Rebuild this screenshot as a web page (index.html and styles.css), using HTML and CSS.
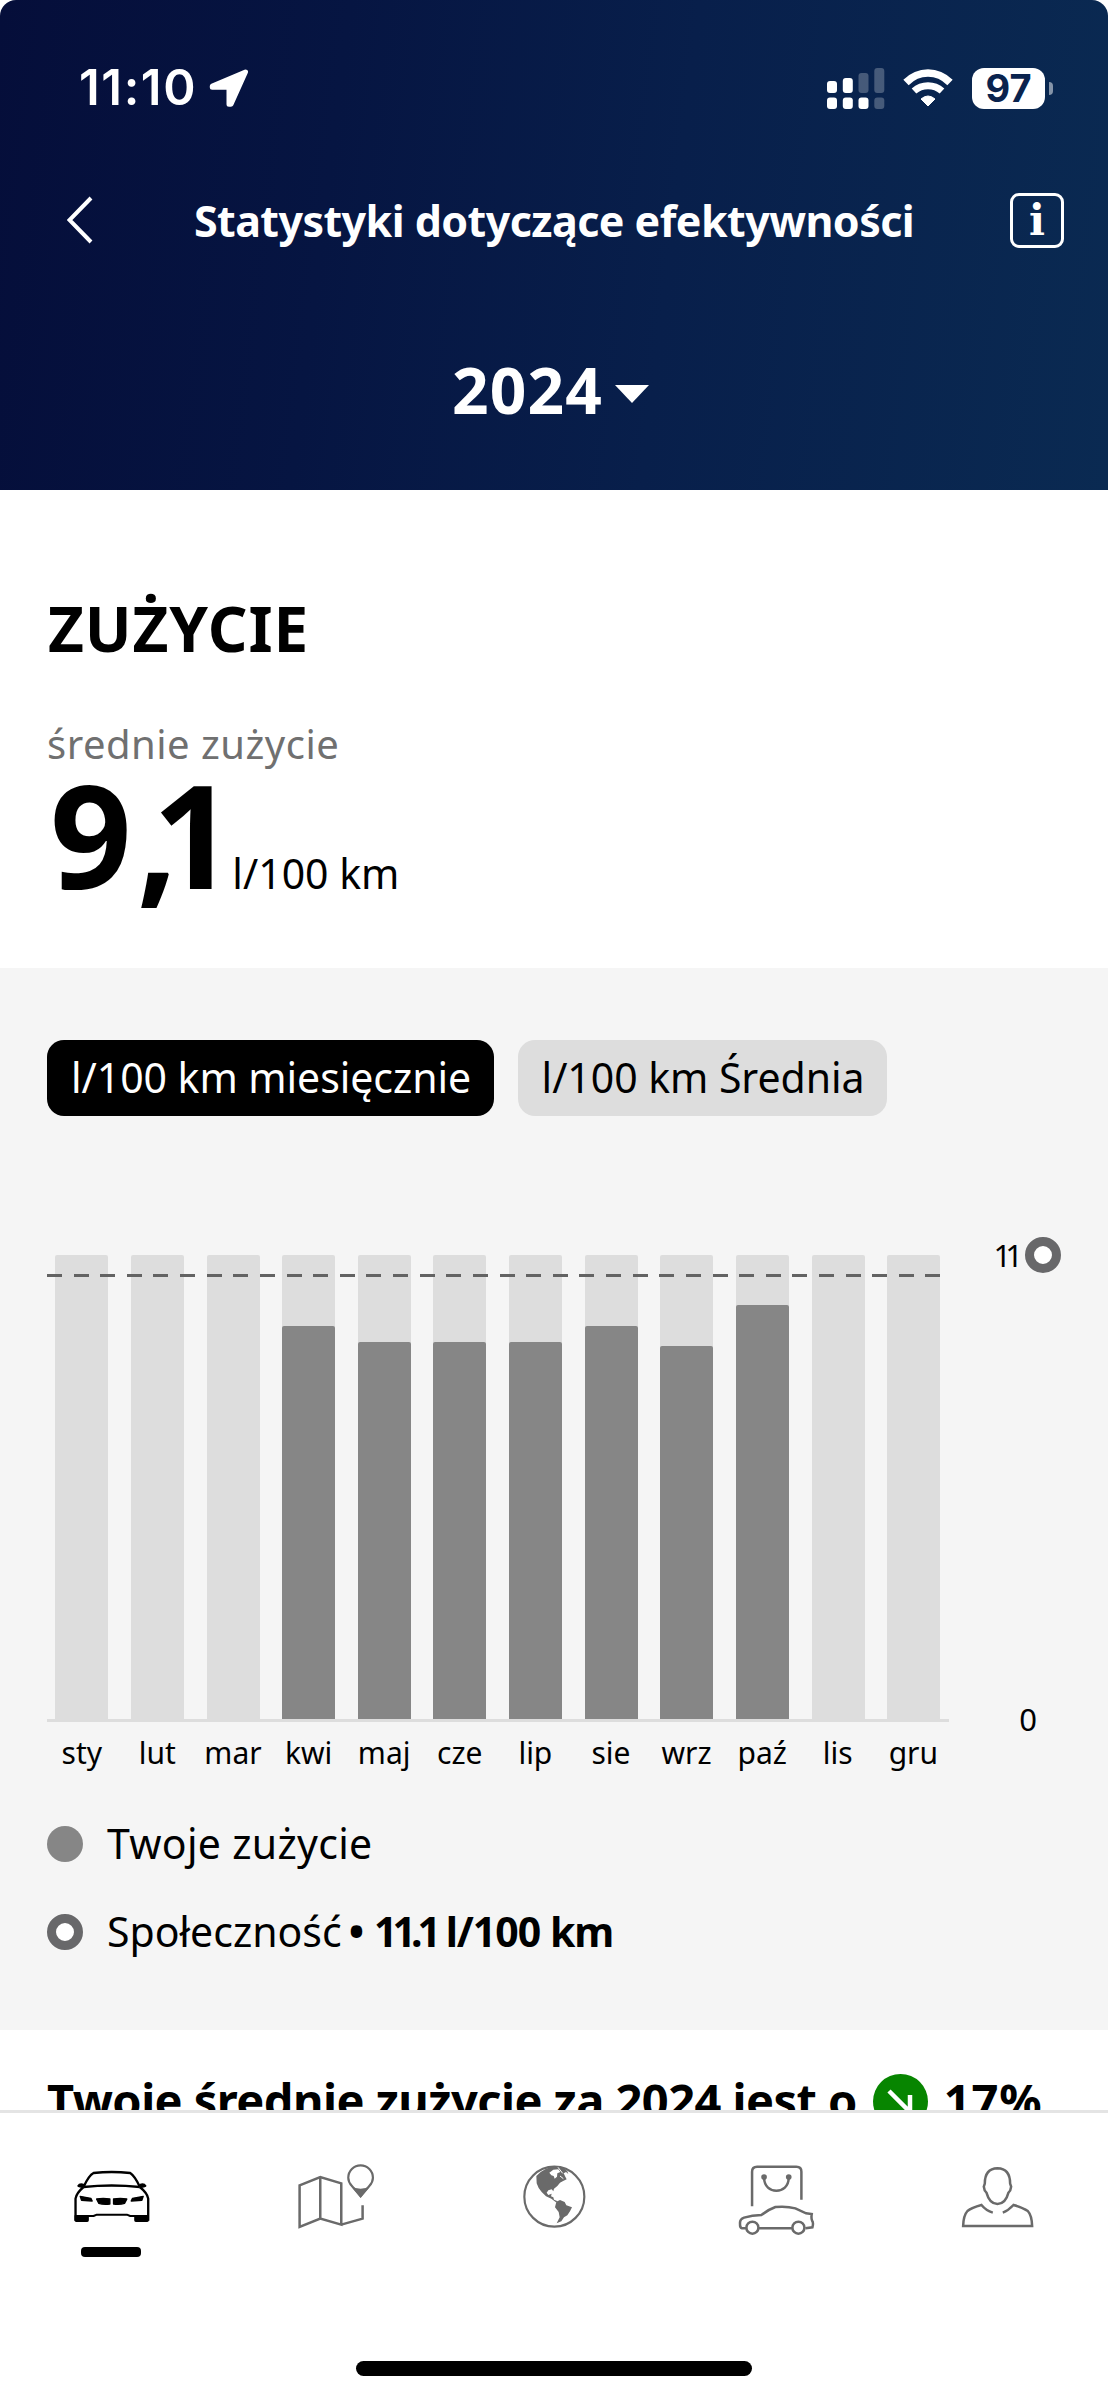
FILE: index.html
```
<!DOCTYPE html>
<html lang="pl">
<head>
    <meta charset="UTF-8">
    <meta name="viewport" content="width=device-width, initial-scale=1.0">
    <title>Statystyki dotyczące efektywności</title>
    <link rel="stylesheet" href="styles.css">
</head>
<body>
    <header class="header">
        <div class="status-bar">
            <span class="time">11:10</span>
            <svg class="location" width="40" height="39" viewBox="0 0 40 39">
                <path d="M36.5 3 L3.3 17 V18.2 H20 V35.3 H22 Z" fill="#fff" stroke="#fff" stroke-width="5" stroke-linejoin="round"/>
            </svg>
            <div class="status-icons">
                <svg width="58" height="41" viewBox="0 0 58 41" fill="#fff">
                    <rect x="0" y="13" width="10" height="12" rx="3"/>
                    <rect x="15.8" y="10" width="10" height="15" rx="3"/>
                    <rect x="31.5" y="5" width="10" height="20" rx="3" opacity=".25"/>
                    <rect x="47.3" y="0" width="10" height="25" rx="3" opacity=".25"/>
                    <rect x="0" y="29.5" width="10" height="11.5" rx="3"/>
                    <rect x="15.8" y="29.5" width="10" height="11.5" rx="3"/>
                    <rect x="31.5" y="29.5" width="10" height="11.5" rx="3"/>
                    <rect x="47.3" y="29.5" width="10" height="11.5" rx="3" opacity=".25"/>
                </svg>
                <svg width="50" height="38" viewBox="0 0 50 38">
                    <path d="M3 13.5 Q12.5 4 25 4 T47 13.5" fill="none" stroke="#fff" stroke-width="7.5"/>
                    <path d="M11 22 Q17 16.7 25 16.7 T39 22" fill="none" stroke="#fff" stroke-width="7"/>
                    <path d="M18 30 Q25 24 32 30 L25 37 Z" fill="#fff" stroke="#fff" stroke-width="1" stroke-linejoin="round"/>
                </svg>
                <div class="battery">
                    <span class="battery-level">97</span>
                    <span class="battery-nub"></span>
                </div>
            </div>
        </div>
        <div class="title-bar">
            <svg class="back" width="26" height="48" viewBox="0 0 26 48">
                <path d="M24 2 L2.5 24 L24 46" fill="none" stroke="#fff" stroke-width="4"/>
            </svg>
            <h1>Statystyki dotyczące efektywności</h1>
            <span class="info">i</span>
        </div>
        <div class="year">
            <span>2024</span>
            <span class="caret"></span>
        </div>
    </header>

    <main class="content">
        <section class="summary">
            <h2>ZUŻYCIE</h2>
            <div class="summary-label">średnie zużycie</div>
            <div class="summary-value"><strong>9<span class="comma">,</span>1</strong><span class="unit">l/100 km</span></div>
        </section>

        <section class="chart-section">
            <div class="chips">
                <span class="chip active">l/100 km miesięcznie</span>
                <span class="chip">l/100 km Średnia</span>
            </div>

            <div class="chart">
                <div class="plot">
                    <div class="bars">
                        <div class="bar"></div>
                        <div class="bar"></div>
                        <div class="bar"></div>
                        <div class="bar"><div class="fill" style="height: 84.8%"></div></div>
                        <div class="bar"><div class="fill" style="height: 81.2%"></div></div>
                        <div class="bar"><div class="fill" style="height: 81.2%"></div></div>
                        <div class="bar"><div class="fill" style="height: 81.2%"></div></div>
                        <div class="bar"><div class="fill" style="height: 84.8%"></div></div>
                        <div class="bar"><div class="fill" style="height: 80.3%"></div></div>
                        <div class="bar"><div class="fill" style="height: 89.2%"></div></div>
                        <div class="bar"></div>
                        <div class="bar"></div>
                        <div class="average-line"></div>
                    </div>
                    <div class="months">
                        <span>sty</span>
                        <span>lut</span>
                        <span>mar</span>
                        <span>kwi</span>
                        <span>maj</span>
                        <span>cze</span>
                        <span>lip</span>
                        <span>sie</span>
                        <span>wrz</span>
                        <span>paź</span>
                        <span>lis</span>
                        <span>gru</span>
                    </div>
                </div>
                <div class="axis">
                    <div class="axis-max"><span>11</span><i class="ring"></i></div>
                    <div class="axis-min">0</div>
                </div>
            </div>

            <div class="legend">
                <div class="legend-row"><i class="dot"></i><span class="legend-text own">Twoje zużycie</span></div>
                <div class="legend-row"><i class="ring"></i><span class="legend-text">Społeczność</span><b class="bullet">•</b><b class="community"><span class="number">11.1</span> l/100 km</b></div>
            </div>
        </section>

        <section class="message">
            <span class="message-text">Twoje średnie zużycie za 2024 jest o</span>
            <svg width="55" height="55" viewBox="0 0 55 55">
                <circle cx="27.5" cy="27.5" r="27.5" fill="#078500"/>
                <path d="M16 17 L36 37 M37 21 V38.5 H19" fill="none" stroke="#fff" stroke-width="4.5"/>
            </svg>
            <span class="message-percent">17%</span>
        </section>
    </main>

    <nav class="tab-bar">
        <!-- vehicle -->
        <a class="tab active">
            <svg viewBox="8.4 -6 264 264" fill="none" stroke="#000" stroke-width="7" stroke-linejoin="round">
                <path d="M58 93 Q74 58 88 51 Q142 45 198 51 Q212 60 227 93"/>
                <path d="M58 93 Q142 84 227 93"/>
                <path d="M58 93 Q36 112 34 128 V194 M227 93 Q250 112 252 128 V194"/>
                <path d="M34 180 H88 L98 176 H188 L198 180 H252" stroke-width="6"/>
                <path d="M31 178 H74 V193 Q74 198 69 198 H36 Q31 198 31 193 Z M210 178 H254 V193 Q254 198 249 198 H215 Q210 198 210 193 Z" fill="#000" stroke="none"/>
                <path d="M60 84 Q46 78 39 89 Q40 95 58 96 Z M226 84 Q240 78 247 89 Q246 95 228 96 Z" fill="#000" stroke="none"/>
                <path d="M48 121 L80 127 L84 135 L52 133 Z M237 121 L205 127 L201 135 L233 133 Z" fill="#000" stroke-width="4"/>
                <path d="M97 129 Q117 126 137 129 V144 Q116 146 104 142 Z M188 129 Q168 126 148 129 V144 Q169 146 181 142 Z" fill="#000" stroke-width="4"/>
            </svg>
        </a>
        <!-- map -->
        <a class="tab">
            <svg viewBox="673.2 -6 264 264" fill="none" stroke="#6a6a6a" stroke-width="7.5">
                <path d="M708 88 L770 63 L833 82 V206 L770 188 L708 213 Z M770 63 V188 M833 206 L897 188 V148"/>
                <path d="M891 121 L865 90 Q854 78 854 65 A37 37 0 0 1 928 65 Q928 78 917 90 Z" stroke-width="6.5"/>
                <path d="M862 90 Q891 107 920 90 L891 125 Z" fill="#6a6a6a" stroke="none"/>
            </svg>
        </a>
        <!-- globe -->
        <a class="tab">
            <svg viewBox="-12 -6 264 264" fill="#6a6a6a">
                <circle cx="121" cy="122" r="90" fill="none" stroke="#6a6a6a" stroke-width="6.5"/>
                <path d="M67 60 Q90 34 128 30 L150 36 L160 46 L163 54 L156 48 L149 52 L154 62 L158 70 L146 76 L138 80 L130 90 L120 98 L118 106 L113 100 L103 103 L98 110 L103 117 L113 113 L111 121 L118 124 L120 131 L131 136 L126 139 L112 128 L96 121 L83 108 L74 96 L68 82 Z"/>
                <path d="M118 41 L106 50 L112 58 L119 60 L122 68 L129 62 L130 52 L139 48 L133 40 Z" fill="#fff"/>
                <path d="M132 34 L146 52 M138 60 L148 68" stroke="#fff" stroke-width="3"/>
                <path d="M127 137 L138 132 L152 138 L157 148 L174 154 L168 166 L160 178 L150 184 L142 196 L128 202 L137 184 L134 168 L123 154 Z"/>
            </svg>
        </a>
        <!-- store -->
        <a class="tab">
            <svg viewBox="19.8 -6 264 264" fill="none" stroke="#6a6a6a" stroke-width="7.5">
                <path d="M80 151 V47 Q80 32 95 32 H213 Q228 32 228 47 V131"/>
                <path d="M116 66 C117 92 134 104 153 104 S189 92 190 66"/>
                <circle cx="116" cy="63" r="8.5" fill="#6a6a6a" stroke="none"/>
                <circle cx="190" cy="63" r="8.5" fill="#6a6a6a" stroke="none"/>
                <path d="M62 217 H50 Q43 215 44 204 Q42 190 56 185 Q80 178 108 177 Q130 160 150 153 Q185 150 210 157 L242 172 L259 174 Q257 186 260 194 Q265 200 261 214 L240 217 M100 217 H200"/>
                <circle cx="81" cy="215" r="18"/>
                <circle cx="219" cy="215" r="18"/>
            </svg>
        </a>
        <!-- profile -->
        <a class="tab">
            <svg viewBox="684.6 -6 264 264" fill="none" stroke="#6a6a6a" stroke-width="7.5">
                <path d="M818 37 Q780 38 780 83 L777 92 Q778 104 785 110 Q794 144 818 144 Q842 144 851 110 Q858 104 859 92 L856 83 Q856 38 818 37 Z"/>
                <path d="M804 170 Q784 164 770 147 Q740 155 728 165 Q716 178 715 210 H922 Q921 178 909 165 Q895 155 866 147 Q850 164 834 170"/>
            </svg>
        </a>
    </nav>
    <div class="home-indicator"></div>
</body>
</html>
```
FILE: styles.css
```
* {
    box-sizing: border-box;
}
body {
    margin: 0;
    width: 1108px;
    height: 2400px;
    overflow: hidden;
    background: #fff;
    color: #000;
    font-family: "Noto Sans", sans-serif;
}
h1, h2 {
    margin: 0;
}

/* header */
.header {
    height: 490px;
    border-radius: 16px 16px 0 0;
    background: linear-gradient(97deg, #050e3a 0%, #061542 30%, #081f4b 60%, #0a2a52 100%);
    color: #fff;
}
.status-bar {
    display: flex;
    align-items: center;
    height: 176px;
    padding: 0 55px 0 79px;
}
.time {
    font: 600 49px/60px Inter, sans-serif;
    letter-spacing: 1.6px;
}
.location {
    margin-left: 12px;
}
.status-icons {
    display: flex;
    align-items: center;
    gap: 18.7px;
    margin-left: auto;
}
.battery {
    display: flex;
    align-items: center;
    gap: 4px;
}
.battery-level {
    width: 73px;
    height: 41px;
    border-radius: 12px;
    background: #fff;
    color: #0a234e;
    font: 700 38px/41px Inter, sans-serif;
    text-align: center;
}
.battery-nub {
    width: 4px;
    height: 13px;
    border-radius: 0 4px 4px 0;
    background: rgba(255, 255, 255, 0.5);
}
.title-bar {
    display: flex;
    align-items: center;
    justify-content: space-between;
    height: 88px;
    padding: 0 44px 0 67px;
}
.title-bar h1 {
    font-size: 43px;
    line-height: 60px;
    letter-spacing: -0.55px;
    margin: 2px 0 0 5px;
}
.info {
    width: 54px;
    height: 55px;
    border: 3px solid #fff;
    border-radius: 9px;
    font: 700 42px/49px "DejaVu Serif", serif;
    text-align: center;
}
.year {
    display: flex;
    align-items: center;
    justify-content: center;
    gap: 12px;
    padding: 86px 7px 0 0;
    font-size: 64px;
    font-weight: 700;
    letter-spacing: 1.2px;
    line-height: 80px;
}
.caret {
    border: 17px solid transparent;
    border-top: 18px solid #fff;
    border-bottom: 0;
    margin-top: 8px;
}

/* scrollable content */
.content {
    height: 1620px;
    overflow: hidden;
}
.summary {
    height: 478px;
    padding: 98px 47px 0;
}
.summary h2 {
    font-size: 62px;
    line-height: 80px;
    letter-spacing: 0.9px;
    margin-left: 1px;
}
.summary-label {
    margin-top: 51px;
    color: #707070;
    font-size: 40px;
    line-height: 49px;
    letter-spacing: 0.5px;
}
.summary-value {
    display: flex;
    align-items: baseline;
    margin-top: 1px;
}
.summary-value strong {
    margin-left: 3px;
    font-size: 143px;
    line-height: 130px;
    letter-spacing: 5px;
}
.summary-value .comma {
    letter-spacing: -25px;
}
.unit {
    margin-left: -7px;
    font-size: 41px;
    line-height: 50px;
}

.chart-section {
    height: 1062px;
    padding: 72px 47px 0;
    background: #f5f5f5;
}
.chips {
    display: flex;
    gap: 23.5px;
}
.chip {
    height: 76px;
    padding: 0 23px 0 24px;
    border-radius: 17px;
    background: #ddd;
    font-size: 41px;
    letter-spacing: -0.05px;
    line-height: 75px;
    white-space: nowrap;
}
.chip.active {
    background: #000;
    color: #fff;
}
.chart {
    display: flex;
    justify-content: space-between;
    margin-top: 139px;
}
.plot {
    width: 902px;
}
.bars {
    position: relative;
    display: flex;
    justify-content: space-between;
    height: 467px;
    padding: 0 8.6px 0 8.2px;
    border-bottom: 3px solid #ddd;
}
.bar {
    display: flex;
    align-items: flex-end;
    width: 53px;
    border-radius: 2px 2px 0 0;
    background: #ddd;
}
.fill {
    width: 100%;
    border-radius: 2px 2px 0 0;
    background: #868686;
}
.average-line {
    position: absolute;
    top: 18.5px;
    left: 0;
    width: 894px;
    height: 3px;
    background: repeating-linear-gradient(90deg, #636363 0 15px, transparent 15px 26.62px);
}
.months {
    display: grid;
    grid-template-columns: repeat(12, 75.6px);
    margin: 11px 0 0 -3px;
    font-size: 30px;
    line-height: 40px;
    text-align: center;
}
.axis {
    display: flex;
    flex-direction: column;
    justify-content: space-between;
    align-items: flex-end;
    height: 512px;
    margin-top: -24px;
    font-size: 31px;
    line-height: 48px;
}
.axis-max {
    display: flex;
    align-items: center;
    gap: 8px;
}
.axis-max span {
    letter-spacing: -6px;
}
.axis-min {
    padding-right: 24px;
}
.ring, .dot {
    width: 36px;
    height: 36px;
    border-radius: 50%;
}
.ring {
    border: 9px solid #68686a;
    background: #fff;
}
.dot {
    background: #868686;
}
.legend {
    display: flex;
    flex-direction: column;
    gap: 39px;
    margin-top: 46px;
    font-size: 41px;
    line-height: 49px;
}
.legend-row {
    display: flex;
    align-items: center;
}
.legend-text {
    margin-left: 24px;
}
.own {
    letter-spacing: 0.3px;
}
.bullet {
    margin: 0 10px 0 7px;
}
.community {
    letter-spacing: -1px;
}
.number {
    letter-spacing: -5px;
}

.message {
    display: flex;
    align-items: center;
    height: 99px;
    padding: 44px 47px 0;
    font-size: 47px;
    font-weight: 700;
    line-height: 50px;
    white-space: nowrap;
}
.message-text {
    padding-bottom: 3px;
    letter-spacing: -0.55px;
    margin-right: 16px;
}
.message-percent {
    padding-bottom: 3px;
    margin-left: 16px;
    letter-spacing: 0.8px;
}

/* bottom navigation */
.tab-bar {
    display: grid;
    grid-template-columns: repeat(5, 1fr);
    height: 251px;
    padding-top: 41px;
    border-top: 3px solid #e4e4e4;
}
.tab {
    display: flex;
    flex-direction: column;
    align-items: center;
}
.tab svg {
    width: 88px;
    height: 88px;
}
.tab.active::after {
    content: "";
    width: 60px;
    height: 10px;
    margin-top: 5px;
    border-radius: 4px;
    background: #000;
}
.home-indicator {
    width: 396px;
    height: 15px;
    margin: 0 auto;
    border-radius: 8px;
    background: #000;
}
```
